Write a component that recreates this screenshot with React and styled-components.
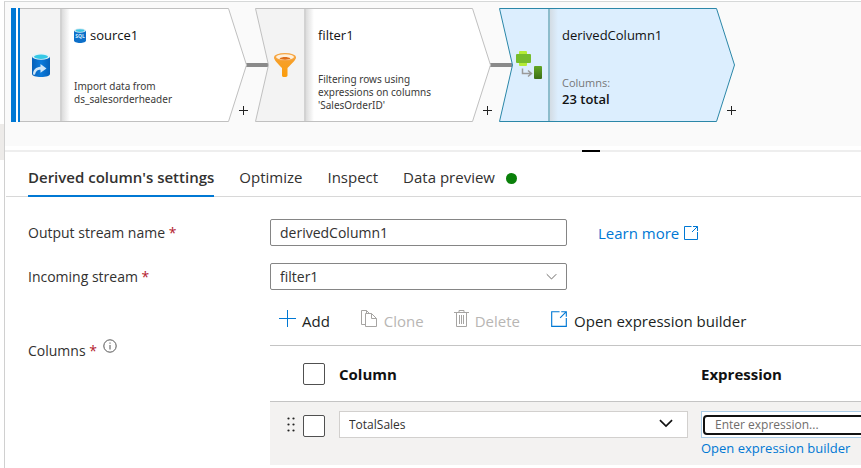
import React from "react";
import styled, { createGlobalStyle } from "styled-components";

const GlobalStyle = createGlobalStyle`
  *, *::before, *::after { box-sizing: border-box; }
  body {
    margin: 0;
    background: #fff;
    overflow: hidden;
    font-family: "Open Sans", "Noto Sans", sans-serif;
    font-size: 14px;
    line-height: 20px;
    color: #323130;
  }
  button, input, select { font: inherit; color: inherit; }
`;

const Page = styled.div`
  display: flex;
  min-height: 100vh;
`;

const Gutter = styled.div`
  flex: none;
  width: 4px;
  padding-top: 124px;
  &::before {
    content: "";
    display: block;
    height: 36px;
    background: #edebe9;
  }
`;

const Main = styled.main`
  flex: 1;
  min-width: 0;
  margin-top: 1px;
  overflow: hidden;
  border-top: 1px solid #d6d8d8;
  border-left: 1px solid #d0d0d0;
`;

const Canvas = styled.section`
  display: flex;
  height: 144px;
  padding: 6px;
  overflow: hidden;
  background: #fafafa;
`;

const Step = styled.div`
  position: relative;
  flex: none;
  display: flex;
  width: 244px;
  height: 114px;
`;

const Shape = styled.svg`
  position: absolute;
  inset: 0;
  overflow: visible;
`;

const StepIcon = styled.div`
  position: relative;
  flex: none;
  display: flex;
  align-items: center;
  justify-content: center;
  width: 50px;
  padding-left: 9px;
`;

const StepBody = styled.div`
  position: relative;
  display: flex;
  flex-direction: column;
  justify-content: space-between;
  padding: 17px 0 ${(p) => p.$bottom || 16}px 13px;
  font-size: 11px;
  line-height: 13px;
  white-space: pre-line;
`;

const StepTitle = styled.h2`
  display: flex;
  align-items: center;
  gap: 4px;
  margin: 0;
  font-size: 13px;
  line-height: 20px;
  font-weight: 500;
  color: #111;
`;

const StepText = styled.p`
  margin: 0;
  font-family: "Noto Sans", "Open Sans", sans-serif;
  font-size: 10px;
  color: #3b3a39;
`;

const Caption = styled.span`
  display: block;
  line-height: 14px;
  color: #777;
`;

const Total = styled.strong`
  display: block;
  font-size: 13px;
  line-height: 18px;
  font-weight: 600;
  color: #111;
`;

const AddStep = styled.button`
  position: absolute;
  right: 7px;
  bottom: 7px;
  display: flex;
  padding: 0;
  border: 0;
  background: none;
`;

const Splitter = styled.div`
  display: flex;
  justify-content: center;
  margin-top: 4px;
  height: 2px;
  background: #eee;
`;

const Grip = styled.div`
  width: 18px;
  margin-left: 316px;
  background: #000;
`;

const Tabs = styled.div`
  display: flex;
  align-items: flex-end;
  gap: 25px;
  height: 45px;
  margin-left: 1px;
  padding-left: 22px;
  border-bottom: 1px solid #d8d8d8;
`;

const Tab = styled.button`
  display: flex;
  align-items: center;
  gap: 11px;
  height: 34px;
  margin-bottom: -1px;
  padding: 0 0 4px;
  border: 0;
  border-bottom: 2px solid ${(p) => (p.$active ? "#0078d4" : "transparent")};
  background: none;
  font-size: 15px;
  font-weight: ${(p) => (p.$active ? 600 : 400)};
  white-space: nowrap;
`;

const Dot = styled.span`
  width: 11px;
  height: 11px;
  margin-top: 2px;
  border-radius: 50%;
  background: #0a800a;
`;

const Form = styled.form`
  display: grid;
  grid-template-columns: 242px minmax(0, 1fr);
  row-gap: 17px;
  padding: 22px 0 0 23px;
`;

const Label = styled.label`
  align-self: center;
`;

const GroupLabel = styled.div`
  display: flex;
  gap: 6px;
  padding-top: 34px;
  svg { margin-top: -2px; }
`;

const Star = styled.span`
  color: #b3202c;
`;

const Line = styled.div`
  display: flex;
  align-items: center;
  gap: 31px;
`;

const TextBox = styled.input`
  width: 297px;
  height: 27px;
  padding: 0 9px;
  border: 1px solid #858585;
  border-radius: 2px;
  background: #fff;
`;

const SelectWrap = styled.div`
  display: grid;
  grid-template-columns: minmax(0, 1fr) auto;
  align-items: center;
  width: ${(p) => (p.$wide ? "349px" : "297px")};
  height: 27px;
  border: 1px solid ${(p) => (p.$wide ? "#d2d0ce" : "#858585")};
  border-radius: ${(p) => (p.$wide ? 0 : 2)}px;
  background: #fff;
  font-size: ${(p) => (p.$wide ? 12 : 14)}px;
  select {
    grid-area: 1 / 1 / 2 / 3;
    width: 100%;
    height: 25px;
    padding: 0 9px;
    border: 0;
    background: none;
    appearance: none;
  }
  svg {
    grid-area: 1 / 2;
    margin-right: ${(p) => (p.$wide ? 14 : 9)}px;
    margin-bottom: ${(p) => (p.$wide ? 4 : 0)}px;
    pointer-events: none;
  }
`;

const Link = styled.a`
  display: inline-flex;
  align-items: center;
  gap: 4px;
  color: #0078d4;
  text-decoration: none;
  font-size: ${(p) => (p.$small ? 13 : 15)}px;
  line-height: 18px;
`;

const Toolbar = styled.div`
  display: flex;
  align-items: center;
  gap: 30px;
  height: 38px;
  padding: 0 0 11px 9px;
`;

const Tool = styled.button`
  display: flex;
  align-items: center;
  gap: 6px;
  padding: 0;
  border: 0;
  background: none;
  color: #201f1e;
  font-size: 15px;
  white-space: nowrap;
  svg { margin-bottom: 4px; }
  &:disabled { color: #b8b6b4; }
`;

const Table = styled.table`
  width: 100%;
  min-width: 860px;
  table-layout: fixed;
  border-collapse: collapse;
  th {
    height: 56px;
    padding: 0;
    border: solid #c4c4c4;
    border-width: 1px 0;
    text-align: left;
    font-size: 15px;
    font-weight: 700;
    color: #111;
  }
  td {
    height: 63px;
    padding: 9px 0 0;
    vertical-align: top;
    background: #f3f2f1;
  }
`;

const Col = styled.col`
  width: ${(p) => p.$w}px;
`;

const Pick = styled.div`
  display: flex;
  align-items: center;
  justify-content: flex-end;
  gap: 8px;
  padding: ${(p) => (p.$row ? 4 : 0)}px 14px 0 0;
  svg { margin-bottom: 4px; }
`;

const Check = styled.input`
  width: 22px;
  height: 22px;
  margin: 0;
  border: 1px solid #505050;
  border-radius: 2px;
  background: #fff;
  appearance: none;
`;

const ExprBox = styled.div`
  display: flex;
  height: 27px;
  padding: 3px 1px 2px;
  border: 1px solid #a9cbe6;
  background: #fff;
`;

const ExprInput = styled.input`
  flex: 1;
  min-width: 0;
  padding: 0 10px;
  border: 2px solid #111;
  border-radius: 4px;
  background: #fff;
  font-size: 12px;
  &::placeholder { color: #6f6d6b; opacity: 1; }
`;

function Plus({ size, color }) {
  const c = Math.floor(size / 2) + 0.5;
  return (
    <svg width={size} height={size} stroke={color} aria-hidden="true">
      <path d={`M${c} 0V${size}M0 ${c}H${size}`} />
    </svg>
  );
}

function Chevron({ size, color, width }) {
  return (
    <svg width={size} height={size} viewBox="0 0 12 12" fill="none" stroke={color} strokeWidth={width} aria-hidden="true">
      <path d="M.8 3.5 6 8.7l5.2-5.2" />
    </svg>
  );
}

function OpenIcon({ size }) {
  return (
    <svg width={size} height={size} viewBox="0 0 16 16" fill="none" stroke="#0078d4" aria-hidden="true">
      <path d="M8.500 1.500h-7v13h13V7M10 1.500h4.500V6M14.500 1.500 9 7" />
    </svg>
  );
}

function CloneIcon() {
  return (
    <svg width="18" height="19" fill="none" stroke="#a6a4a2" aria-hidden="true">
      <path d="M5.500 15.500h-4v-14h5l3 3M5.500 4.500h6l5 5v8h-11zM11.500 4.500v5h5M6.500 1.500v3" />
    </svg>
  );
}

function TrashIcon() {
  return (
    <svg width="15" height="19" fill="none" stroke="#a6a4a2" aria-hidden="true">
      <path d="M0 3.500h15M5 3V1.500h5V3M2.500 3.500v14h10v-14M5.500 6v9M7.500 6v9M9.500 6v9" />
    </svg>
  );
}

function InfoIcon() {
  return (
    <svg width="14" height="14" fill="none" stroke="#555" aria-hidden="true">
      <circle cx="7" cy="7" r="6.2" />
      <path d="M7 6v4.500M7 3.500v1.200" />
    </svg>
  );
}

function DragIcon() {
  return (
    <svg width="8" height="15" fill="#222" aria-hidden="true">
      {[1, 7, 13].map((y) => (
        <g key={y}>
          <circle cx="1.500" cy={y + 0.5} r="1.100" />
          <circle cx="6.500" cy={y + 0.5} r="1.100" />
        </g>
      ))}
    </svg>
  );
}

function SourceIcon() {
  return (
    <svg width="20" height="24" aria-hidden="true">
      <defs>
        <linearGradient id="db" x1="0" x2="1">
          <stop offset="0" stopColor="#0560b8" />
          <stop offset=".5" stopColor="#0b7bdc" />
          <stop offset="1" stopColor="#0560b8" />
        </linearGradient>
      </defs>
      <path d="M1 3.500V21c0 1.700 4 3 9 3s9-1.300 9-3V3.500z" fill="url(#db)" />
      <ellipse cx="10" cy="3.500" rx="9" ry="3.200" fill="#e4f3f8" />
      <ellipse cx="10" cy="3.700" rx="7" ry="2.200" fill="#35c8e6" />
      <path d="M2 21.500c0-5 3-7.500 7.500-7.800V11l6 4.500-6 4.300v-3c-3 0-4.500 1.200-5.500 5z" fill="#cfe6f8" />
    </svg>
  );
}

function SqlIcon() {
  return (
    <svg width="12" height="15" aria-hidden="true">
      <path d="M0 2.500v10C0 14 2.700 15 6 15s6-1 6-2.500v-10z" fill="#0c6fc9" />
      <ellipse cx="6" cy="2.500" rx="6" ry="2.200" fill="#dcecf3" />
      <ellipse cx="6" cy="2.600" rx="4.500" ry="1.300" fill="#3cc4e4" />
      <text x="6" y="10" textAnchor="middle" fontSize="5" fontWeight="700" fill="#d8ecfb">SQL</text>
    </svg>
  );
}

function FilterIcon() {
  return (
    <svg width="22" height="24" aria-hidden="true">
      <defs>
        <linearGradient id="funnel" x1="0" y1="0" x2="0" y2="1">
          <stop offset="0" stopColor="#f5a030" />
          <stop offset="1" stopColor="#fb9d0c" />
        </linearGradient>
      </defs>
      <path d="M0 4c0 3 3 6 8 11v7.500c0 1 1 1.500 2.500 1.500s3-.5 3-1.500V15C18.500 10 22 7 22 4z" fill="url(#funnel)" />
      <ellipse cx="11" cy="4" rx="11" ry="4" fill="#f6a541" />
      <ellipse cx="11" cy="4" rx="9" ry="2.800" fill="#fff0db" />
      <path d="M5.500 5.500c2.500-2 8.500-2 11 0-2.500 1.500-8.500 1.500-11 0z" fill="#dd6d19" />
    </svg>
  );
}

function DerivedIcon() {
  return (
    <svg width="26" height="29" aria-hidden="true">
      <defs>
        <linearGradient id="leaf" x1="0" y1="0" x2="0" y2="1">
          <stop offset="0" stopColor="#62a624" />
          <stop offset="1" stopColor="#3c6f17" />
        </linearGradient>
      </defs>
      <rect x="3" width="8" height="15" rx="1" fill="#b4ec36" />
      <rect y="3" width="15" height="9" rx="1" fill="#76bc2d" />
      <path d="M6.500 17.500v5H15M12 19.500l3.500 3-3.500 3" fill="none" stroke="#9a9a9a" strokeWidth="1.500" />
      <rect x="18" y="15" width="8" height="13" rx="1" fill="url(#leaf)" />
    </svg>
  );
}

function StepShape({ kind }) {
  const active = kind === "active";
  const source = kind === "source";
  const line = active ? "#2b87a8" : "#c0c0c0";
  const notch = source ? "" : " 13.500,57";
  const outline = `.500,.500 217.500,.500 235.500,57 217.500,113.500 .500,113.500${notch}`;
  const shade = `shade-${kind}`;
  return (
    <Shape width="244" height="114" aria-hidden="true">
      <defs>
        <linearGradient id={shade}>
          <stop offset="0" stopColor={active ? "#d3dce4" : "#dcdcdc"} />
          <stop offset="1" stopColor={active ? "#dceefe" : "#fff"} />
        </linearGradient>
      </defs>
      {!active && <path d="M235 57h23" stroke="#8a8a8a" strokeWidth="4" />}
      <polygon points={outline} fill={active ? "#dceefe" : "#fff"} />
      <polygon points={`.500,.500 50,.500 50,113.500 .500,113.500${notch}`} fill={active ? "#dceefe" : "#f3f3f3"} />
      <rect x="51" y="1" width="8" height="112" fill={`url(#${shade})`} />
      <path d="M50 1v112" stroke={active ? "#8dbccb" : "#d2d2d2"} strokeWidth="2" />
      <polygon points={outline} fill="none" stroke={line} />
      {source && (
        <g>
          <rect width="9" height="114" fill="#fff" />
          <rect width="5" height="114" fill="#0078d4" />
          <rect x="7" width="2" height="114" fill="#0078d4" />
        </g>
      )}
    </Shape>
  );
}

function FlowStep({ kind, icon, titleIcon, title, bottom, children }) {
  return (
    <Step>
      <StepShape kind={kind} />
      <StepIcon>{icon}</StepIcon>
      <StepBody $bottom={bottom}>
        <StepTitle>{titleIcon}{title}</StepTitle>
        {children}
      </StepBody>
      <AddStep type="button" aria-label={`Add a step after ${title}`}>
        <Plus size={9} color="#222" />
      </AddStep>
    </Step>
  );
}

export default function App() {
  return (
    <Page>
      <GlobalStyle />
      <Gutter />
      <Main>
        <Canvas>
          <FlowStep kind="source" icon={<SourceIcon />} titleIcon={<SqlIcon />} title="source1">
            <StepText>{"Import data from\nds_salesorderheader"}</StepText>
          </FlowStep>
          <FlowStep kind="filter" icon={<FilterIcon />} title="filter1" bottom={10}>
            <StepText>{"Filtering rows using\nexpressions on columns\n'SalesOrderID'"}</StepText>
          </FlowStep>
          <FlowStep kind="active" icon={<DerivedIcon />} title="derivedColumn1" bottom={14}>
            <div>
              <Caption>Columns:</Caption>
              <Total>23 total</Total>
            </div>
          </FlowStep>
        </Canvas>
        <Splitter><Grip /></Splitter>
        <Tabs role="tablist">
          <Tab role="tab" aria-selected="true" $active>Derived column's settings</Tab>
          <Tab role="tab" aria-selected="false">Optimize</Tab>
          <Tab role="tab" aria-selected="false">Inspect</Tab>
          <Tab role="tab" aria-selected="false">Data preview<Dot /></Tab>
        </Tabs>
        <Form onSubmit={(e) => e.preventDefault()}>
          <Label htmlFor="stream">Output stream name <Star>*</Star></Label>
          <Line>
            <TextBox id="stream" defaultValue="derivedColumn1" />
            <Link href="#learn">Learn more <OpenIcon size={16} /></Link>
          </Line>
          <Label htmlFor="incoming">Incoming stream <Star>*</Star></Label>
          <SelectWrap>
            <select id="incoming"><option>filter1</option></select>
            <Chevron size={11} color="#605e5c" width={1} />
          </SelectWrap>
          <GroupLabel><span>Columns <Star>*</Star></span><InfoIcon /></GroupLabel>
          <div>
            <Toolbar>
              <Tool type="button"><Plus size={17} color="#0078d4" />Add</Tool>
              <Tool type="button" disabled><CloneIcon />Clone</Tool>
              <Tool type="button" disabled><TrashIcon />Delete</Tool>
              <Tool type="button"><OpenIcon size={18} />Open expression builder</Tool>
            </Toolbar>
            <Table>
              <colgroup><Col $w={69} /><Col $w={362} /><col /></colgroup>
              <thead>
                <tr>
                  <th scope="col"><Pick><Check type="checkbox" aria-label="Select all columns" /></Pick></th>
                  <th scope="col">Column</th>
                  <th scope="col">Expression</th>
                </tr>
              </thead>
              <tbody>
                <tr>
                  <td><Pick $row><DragIcon /><Check type="checkbox" aria-label="Select TotalSales" /></Pick></td>
                  <td>
                    <SelectWrap $wide>
                      <select aria-label="Column"><option>TotalSales</option></select>
                      <Chevron size={14} color="#111" width={1.4} />
                    </SelectWrap>
                  </td>
                  <td>
                    <ExprBox><ExprInput aria-label="Expression" placeholder="Enter expression..." /></ExprBox>
                    <Link href="#builder" $small>Open expression builder</Link>
                  </td>
                </tr>
              </tbody>
            </Table>
          </div>
        </Form>
      </Main>
    </Page>
  );
}
